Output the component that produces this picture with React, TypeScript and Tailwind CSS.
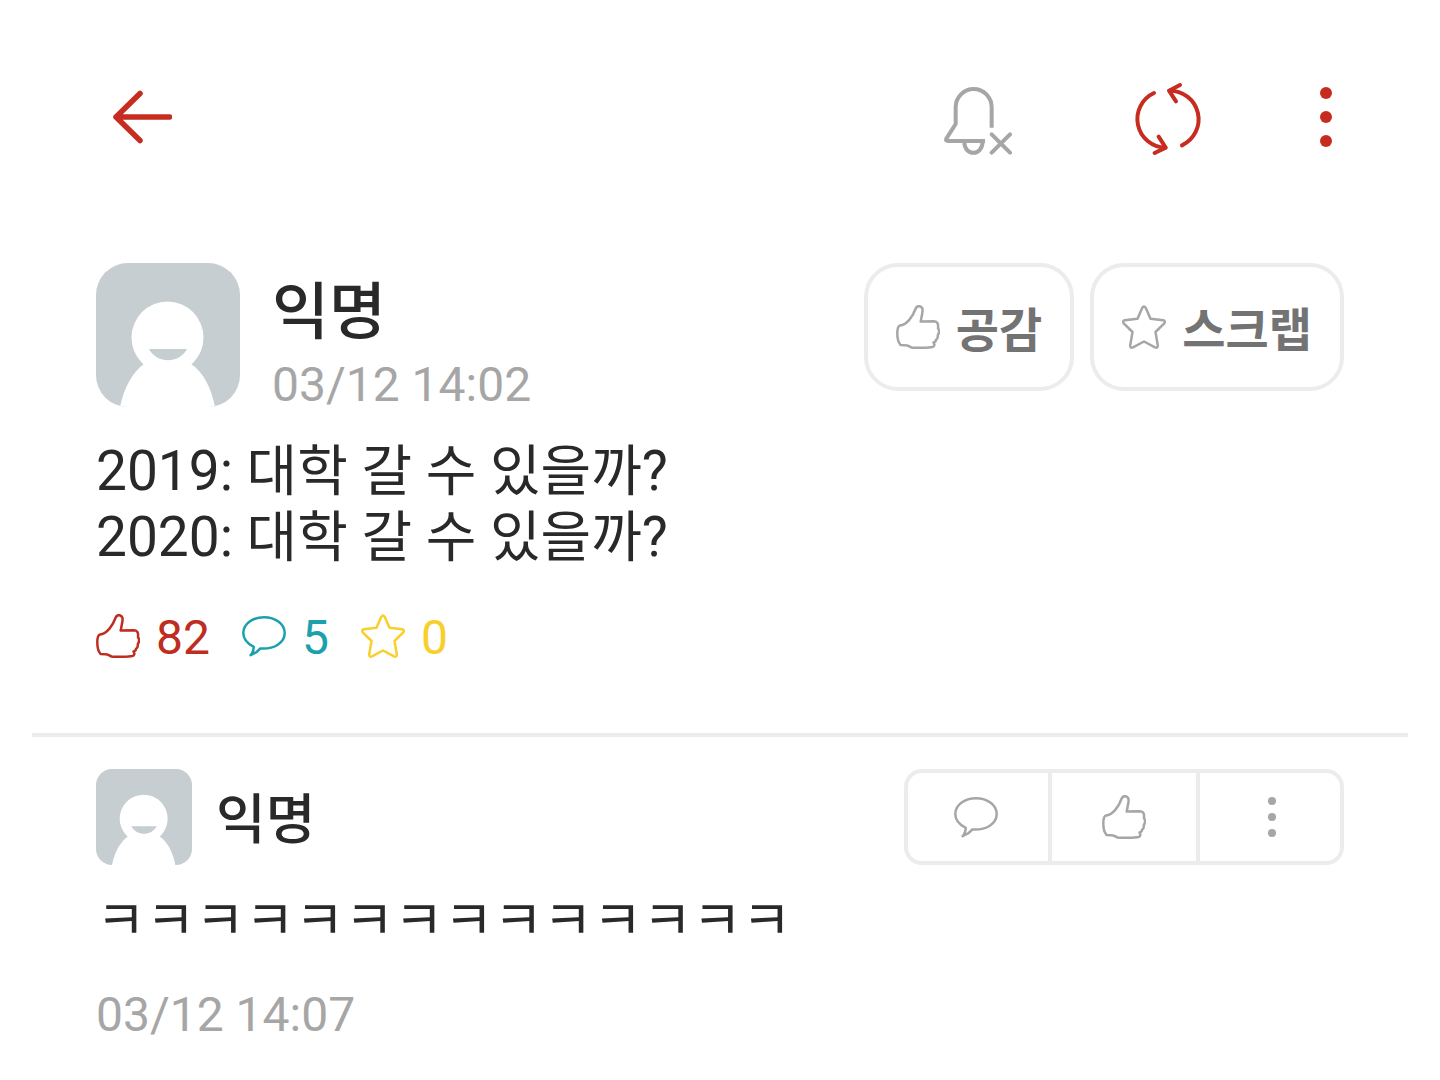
import { type FC, type ReactNode } from "react";

type IconProps = { className?: string };

const BackIcon: FC<IconProps> = ({ className }) => (
  <svg
    viewBox="-1 0 64 56"
    className={className}
    fill="none"
    stroke="currentColor"
    strokeWidth="5.500"
    strokeLinecap="round"
    strokeLinejoin="round"
    aria-hidden="true"
  >
    <path d="M31 4.500 L7 28 L31 51.500 M7 28 H60.500" />
  </svg>
);

const BellOffIcon: FC<IconProps> = ({ className }) => (
  <svg
    viewBox="42 27 228 228"
    className={className}
    fill="none"
    stroke="currentColor"
    strokeWidth="12"
    strokeLinejoin="round"
    aria-hidden="true"
  >
    <path d="M185 173 V112 A54 55 0 0 0 77 112 V162 L49 206 Q46 213 54 213 H165" />
    <path d="M103 215 C103 260 158 260 158 213" />
    <path strokeLinecap="round" d="M185 193 L240 248 M240 193 L185 248" />
  </svg>
);

const RefreshIcon: FC<IconProps> = ({ className }) => (
  <svg
    viewBox="36 27 228 228"
    className={className}
    fill="none"
    stroke="currentColor"
    strokeWidth="12"
    strokeLinecap="round"
    strokeLinejoin="round"
    aria-hidden="true"
  >
    <path d="M102 69 A86 86 0 0 0 136 233" />
    <path d="M116 200 L137 233 L104 249" />
    <path d="M186 226 A86 86 0 0 0 149 62" />
    <path d="M168 94 L147 62 L180 45" />
  </svg>
);

const ThumbIcon: FC<IconProps> = ({ className }) => (
  <svg
    viewBox="0 0 44 44"
    className={className}
    fill="none"
    stroke="currentColor"
    strokeWidth="2.500"
    strokeLinejoin="round"
    aria-hidden="true"
  >
    <path d="M4 20.500 C11 20 17 11 19.700 3.500 C20.500 1.200 22 1 23.500 1.200 C26.500 1.800 27 4.500 26.300 8 L24.700 16.600 L38 16.300 C41.500 16.500 42.500 18.500 42 23.500 C43.500 24.500 43.500 28 41.800 30 C42 32.500 41.500 34 40 34.800 C40 36.500 39.500 37 37.500 37.500 C39 39.500 38.500 41.500 36.500 42 C30 43 22 43 15.500 42.500 C13 41.500 12 40.200 9.500 40.200 L4.500 40 C2 37 1.300 33 1.300 28.500 C1.300 25 2 21 4 20.500 Z" />
  </svg>
);

const CommentIcon: FC<IconProps> = ({ className }) => (
  <svg
    viewBox="0 0 44 44"
    className={className}
    fill="none"
    stroke="currentColor"
    strokeWidth="2.500"
    strokeLinejoin="round"
    aria-hidden="true"
  >
    <path d="M11.800 32.800 C5 29.500 1.300 24.500 1.300 19 C1.300 10.200 10.400 3.300 22 3.300 C33.600 3.300 42.700 10.200 42.700 19 C42.700 28.500 32.500 35.500 18.300 34.500 L14.500 38.200 L8.600 41.200 C10.800 39 11.500 36 11.800 32.800 Z" />
  </svg>
);

const StarIcon: FC<IconProps> = ({ className }) => (
  <svg
    viewBox="0 0 44 44"
    className={className}
    fill="none"
    stroke="currentColor"
    strokeWidth="2.500"
    strokeLinejoin="round"
    aria-hidden="true"
  >
    <path d="M20.300 2.800 Q22 0 23.700 2.800 L28.500 13.700 L41.200 15.300 Q44 16.200 42 18.600 L33.500 27 L35.800 40.500 Q35.800 43.500 33 42.300 L22 36.500 L11 42.300 Q8.200 43.500 8.200 40.500 L10.500 27 L2 18.600 Q0 16.200 2.800 15.300 L15.500 13.700 Z" />
  </svg>
);

const MoreIcon: FC<IconProps> = ({ className }) => (
  <svg
    viewBox="0 0 12 60"
    className={className}
    fill="currentColor"
    aria-hidden="true"
  >
    <circle cx="6" cy="6" r="6" />
    <circle cx="6" cy="30" r="6" />
    <circle cx="6" cy="54" r="6" />
  </svg>
);

const Avatar: FC<IconProps> = ({ className }) => (
  <svg viewBox="0 0 144 144" className={className} aria-hidden="true">
    <rect width="144" height="144" fill="#c6ced1" />
    <circle cx="71.500" cy="74.500" r="36" fill="#fff" />
    <path
      d="M24 144 C28 124 37 109 48 101 H95 C107 109 115 124 119 144 Z"
      fill="#fff"
    />
    <path d="M53 86 H91 C83 101 61 101 53 86 Z" fill="#c6ced1" />
  </svg>
);

const ActionButton: FC<{ icon: ReactNode; label: string }> = ({
  icon,
  label,
}) => (
  <button
    type="button"
    className="flex h-32 items-center gap-4 rounded-[34px] border-4 border-[#ececec] px-7 text-[47px] font-bold whitespace-nowrap text-[#737373]"
  >
    {icon}
    <span className="pt-2 leading-16">{label}</span>
  </button>
);

const Count: FC<{ icon: ReactNode; value: number; className: string }> = ({
  icon,
  value,
  className,
}) => (
  <li className={`flex h-16 items-center gap-4 ${className}`}>
    {icon}
    <span className="pt-1 leading-15">{value}</span>
  </li>
);

const App: FC = () => {
  return (
    <div className="min-h-screen bg-white font-[Roboto,'Noto_Sans_CJK_KR',sans-serif] text-[#292929]">
      <header className="flex items-center justify-between px-27 pt-[79px]">
        <button type="button" aria-label="뒤로" className="text-[#c62d20]">
          <BackIcon className="h-14 w-16" />
        </button>
        <div className="flex items-center gap-28">
          <button
            type="button"
            aria-label="알림 끄기"
            className="text-[#a6a6a6]"
          >
            <BellOffIcon className="size-19" />
          </button>
          <button
            type="button"
            aria-label="새로고침"
            className="text-[#c62d20]"
          >
            <RefreshIcon className="size-19" />
          </button>
          <button type="button" aria-label="더보기" className="text-[#c62d20]">
            <MoreIcon className="h-15 w-3" />
          </button>
        </div>
      </header>

      <main className="px-8 pt-27">
        <article className="border-b-4 border-[#ececec] px-16 pb-[65px]">
          <div className="flex items-start justify-between">
            <div className="flex items-start gap-8">
              <Avatar className="size-36 rounded-[32px]" />
              <div className="pt-[10px]">
                <h1 className="text-[62px] leading-20 font-medium">익명</h1>
                <time className="block text-5xl leading-16 text-[#a6a6a6]">
                  03/12 14:02
                </time>
              </div>
            </div>
            <div className="flex gap-4">
              <ActionButton
                icon={<ThumbIcon className="size-11 text-[#a6a6a6]" />}
                label="공감"
              />
              <ActionButton
                icon={<StarIcon className="size-11 text-[#a6a6a6]" />}
                label="스크랩"
              />
            </div>
          </div>

          <p className="mt-[21px] text-[55px] leading-[66px]">
            2019: 대학 갈 수 있을까?
            <br />
            2020: 대학 갈 수 있을까?
          </p>

          <ul className="mt-[34px] flex gap-8 text-5xl">
            <Count
              icon={<ThumbIcon className="size-11" />}
              value={82}
              className="text-[#bf2d20]"
            />
            <Count
              icon={<CommentIcon className="size-11" />}
              value={5}
              className="text-[#1ba1ab]"
            />
            <Count
              icon={<StarIcon className="size-11" />}
              value={0}
              className="text-[#f9cf2b]"
            />
          </ul>
        </article>

        <article className="px-16 pt-8">
          <div className="flex items-center justify-between">
            <div className="flex items-center gap-6">
              <Avatar className="size-24 rounded-2xl" />
              <h2 className="pt-2 text-[54px] leading-18 font-medium">익명</h2>
            </div>
            <div className="flex rounded-[18px] inset-ring-4 inset-ring-[#ececec]">
              <button
                type="button"
                aria-label="댓글"
                className="flex h-24 w-36 items-center justify-center text-[#a6a6a6]"
              >
                <CommentIcon className="size-11" />
              </button>
              <span className="w-1 bg-[#ececec]" />
              <button
                type="button"
                aria-label="공감"
                className="flex h-24 w-36 items-center justify-center text-[#a6a6a6]"
              >
                <ThumbIcon className="size-11" />
              </button>
              <span className="w-1 bg-[#ececec]" />
              <button
                type="button"
                aria-label="더보기"
                className="flex h-24 w-36 items-center justify-center text-[#a6a6a6]"
              >
                <MoreIcon className="h-10 w-2" />
              </button>
            </div>
          </div>

          <p className="mt-6 text-[54px] leading-[66px]">
            ㅋㅋㅋㅋㅋㅋㅋㅋㅋㅋㅋㅋㅋㅋ
          </p>
          <time className="mt-7 block text-5xl leading-16 text-[#a6a6a6]">
            03/12 14:07
          </time>
        </article>
      </main>
    </div>
  );
};

export default App;
